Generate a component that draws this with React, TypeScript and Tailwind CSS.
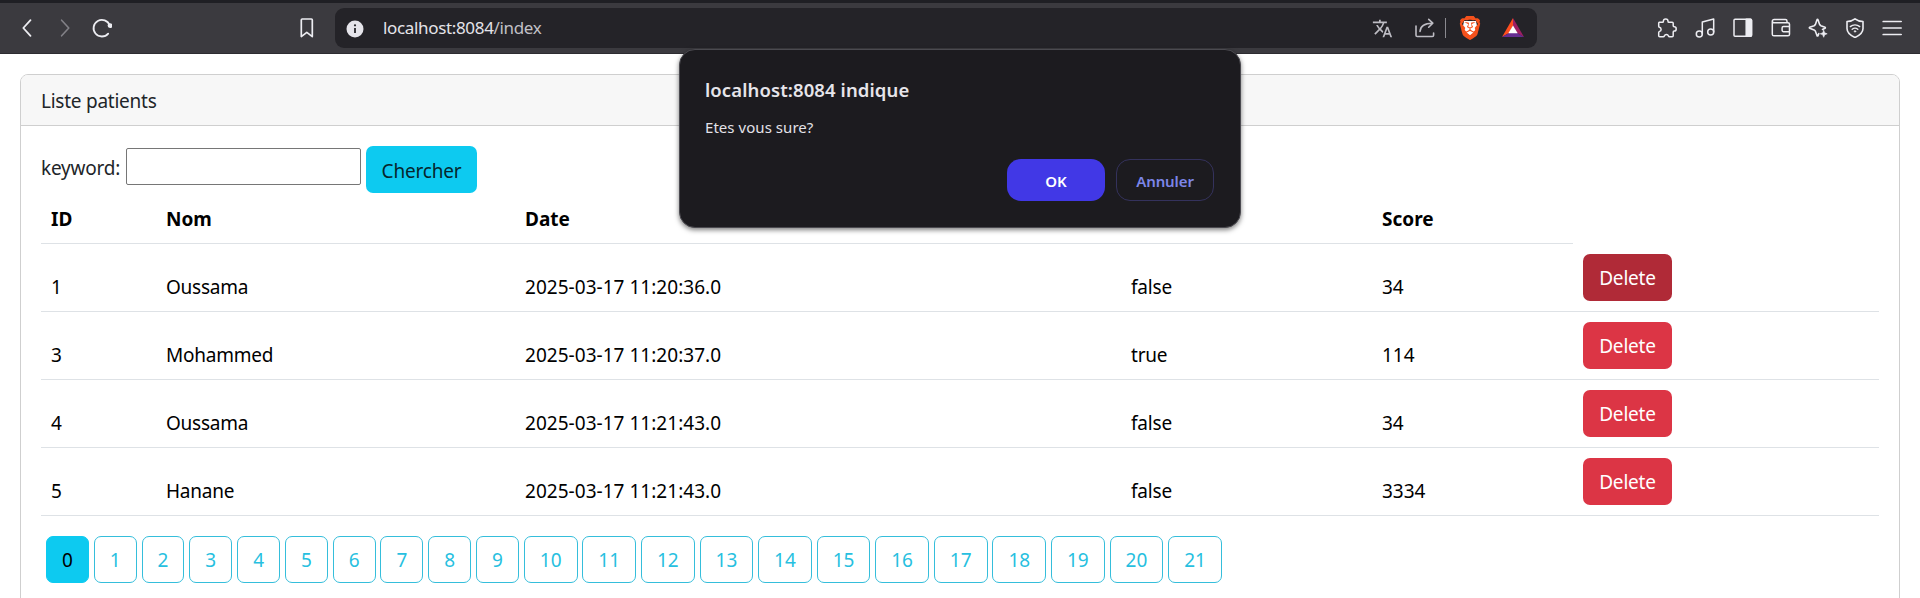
import type { ReactNode } from "react";
import { MdTranslate } from "react-icons/md";
import { SiBrave } from "react-icons/si";

function Icon({ children, className, width = 1.5 }: { children: ReactNode; className: string; width?: number }) {
  return (
    <svg
      viewBox="0 0 20 20"
      fill="none"
      stroke="currentColor"
      strokeWidth={width}
      strokeLinecap="round"
      strokeLinejoin="round"
      className={`size-5 shrink-0 ${className}`}
    >
      {children}
    </svg>
  );
}

function Toolbar() {
  return (
    <header className="flex h-[54px] items-center border-t-[3px] border-b border-t-[#1f1f24] border-b-[#2d2c31] bg-[#3b3a3f] pl-[17px] text-[#ededf2]">
      <Icon className="" width={1.8}><path d="M13.5 2.2 6.3 10l7.2 7.8" /></Icon>
      <Icon className="ml-[18px] text-[#828187]" width={1.6}><path d="M6.6 2.2 13.8 10l-7.2 7.8" /></Icon>
      <Icon className="ml-[17px]" width={1.8}>
        <path d="M17.700 7.400A8.300 8.300 0 1 0 16.200 15.600" />
        <circle cx="18" cy="7.600" r="1.500" fill="currentColor" />
      </Icon>
      <Icon className="ml-[186px]" width={1.7}><path d="M4.2 1h9.2a.9.9 0 0 1 .9.9v16.7l-5.500-4.200-5.500 4.200V1.900a.9.9 0 0 1 .9-.9Z" /></Icon>
      <div className="ml-[17px] flex h-10 w-[1202px] items-center rounded-[9px] bg-[#242328] pl-[11px] text-[#e5e4ea]">
        <svg viewBox="0 0 18 18" className="mt-0.5 size-[18px] shrink-0">
          <circle cx="9" cy="9" r="8.5" fill="#e5e4ea" />
          <path d="M9 8v5" stroke="#242328" strokeWidth="1.8" />
          <circle cx="9" cy="5.3" r="1.1" fill="#242328" />
        </svg>
        <span className="ml-[19px] w-[170px] whitespace-nowrap text-[17px] leading-10 tracking-[-0.34px]">
          localhost:8084<span className="text-[#c1c0c6]">/index</span>
        </span>
        <MdTranslate className="ml-[819px] size-[21px] text-[#bdbcc3]" />
        <Icon className="ml-[22px] text-[#bdbcc3]" width={1.6}>
          <path d="M1 8v9.2A1.3 1.3 0 0 0 2.300 18.500h15A1.300 1.300 0 0 0 18.600 17.200V15" />
          <path d="M5 13.500c.3-5 3.500-8.300 12.500-8.300M13.700 1.300l4.100 3.900-4.100 4" />
        </Icon>
        <span className="ml-[10px] h-5 w-px bg-[#8b8a90]" />
        <span className="relative ml-3 block size-[24px]">
          <svg viewBox="0 0 24 24" className="absolute inset-0 size-6"><path d="M6 5h12l1 5-2 7-5 3.500L7 17 5 10Z" fill="#fff" /></svg>
          <SiBrave className="absolute inset-0 size-6 text-[#f4511c]" />
        </span>
        <svg viewBox="0 0 24 22" className="ml-[19px] h-[22px] w-6">
          <path d="M12 1 1 20l7-4 4-7Z" fill="#ff4e1f" />
          <path d="M12 1v8l4 7 7 4Z" fill="#9e1f63" />
          <path d="M1 20h22l-7-4H8Z" fill="#662d91" />
          <path d="m12 8.500-4.700 7.800h9.400Z" fill="#fff" />
        </svg>
      </div>
      <Icon className="ml-[120px]">
        <path d="M2.200 4.300h3.300c.7 0 .9-.5.9-1.100C6.400 1.900 7.400 1 8.700 1S11 1.900 11 3.200c0 .6.2 1.100.9 1.100h3.300c.7 0 1 .4 1 1v2.500c0 .7.400 1 1 1 1.200 0 2 1 2 2.100 0 1.200-.8 2.200-2 2.200-.6 0-1 .3-1 1v3.700c0 .7-.4 1-1 1h-2.700c-.7 0-.9-.4-1.100-.9-.3-1-1-1.500-2-1.500s-1.700.5-2 1.500c-.2.5-.4.900-1.100.9H2.700c-.6 0-1-.4-1-1V14.500c0-.7.4-.9.9-1.100 1-.3 1.500-1 1.500-2s-.6-1.800-1.600-2.100c-.5-.1-.8-.4-.8-1V5.300c0-.6.300-1 .5-1Z" />
      </Icon>
      <Icon className="ml-[18px]">
        <circle cx="4.300" cy="16" r="3" />
        <circle cx="15.700" cy="14" r="3" />
        <path d="M7.300 16V4l11.400-3v13" />
      </Icon>
      <Icon className="ml-[18px]">
        <rect x="1" y="1.300" width="17.500" height="17" rx="1" />
        <path d="M13.200 1.300h4.300a1 1 0 0 1 1 1v15a1 1 0 0 1-1 1h-4.300Z" fill="currentColor" />
      </Icon>
      <Icon className="ml-[18px]">
        <path d="M1.300 3.500v12.700c0 1 .7 1.600 1.600 1.600h14c.9 0 1.600-.6 1.600-1.600V6.300c0-1-.7-1.600-1.600-1.600H3.200c-1 0-1.900-.3-1.900-1.500 0-1 .8-1.600 1.800-1.600h11.300c1 0 1.600.6 1.600 1.600v1.400M18.500 8.600h-6a1.400 1.400 0 0 0-1.400 1.400v2.300a1.400 1.400 0 0 0 1.400 1.400h6Z" />
      </Icon>
      <Icon className="ml-[17px]" width={1.6}>
        <path d="M14.500 11.500 17 10.200c.5-.3.5-.7 0-.9l-4.100-1.600c-.6-.3-1-.7-1.300-1.300L10 1.700c-.2-.5-.8-.5-1 0L7.400 6.400c-.3.600-.7 1-1.300 1.300L1.700 9.300c-.5.2-.5.700 0 .9l4.400 1.700c.6.3 1 .7 1.300 1.300L9 17.600c.2.5.8.5 1 0l.8-2" />
        <path d="m15.700 12.300 1 2.500 2.500 1-2.500 1-1 2.500-1-2.500-2.500-1 2.500-1Z" fill="currentColor" strokeWidth=".6" />
      </Icon>
      <Icon className="ml-[17px]" width={1.6}>
        <path d="M10 .8C12 2.400 14.500 3.400 18 3.500v7c0 4-3.700 7-8 9-4.300-2-8-5-8-9v-7C5.500 3.400 8 2.400 10 .8Z" />
        <path d="M5.300 8.600c2.700-2.300 6.700-2.300 9.400 0M7.200 11.200c1.700-1.300 3.900-1.300 5.600 0" strokeWidth="1.400" />
        <circle cx="10" cy="13.400" r=".8" fill="currentColor" strokeWidth=".6" />
      </Icon>
      <Icon className="ml-[17px]" width={1.7}><path d="M1.200 3.500h18M1.200 10h18M1.200 16.500h18" /></Icon>
    </header>
  );
}

const patients = [
  { id: 1, nom: "Oussama", date: "2025-03-17 11:20:36.0", malade: "false", score: 34 },
  { id: 3, nom: "Mohammed", date: "2025-03-17 11:20:37.0", malade: "true", score: 114 },
  { id: 4, nom: "Oussama", date: "2025-03-17 11:21:43.0", malade: "false", score: 34 },
  { id: 5, nom: "Hanane", date: "2025-03-17 11:21:43.0", malade: "false", score: 3334 },
];

const pages = Array.from({ length: 22 }, (_, i) => i);

function PatientTable() {
  return (
    <table className="w-[1838px] table-fixed border-separate border-spacing-0 text-left text-black">
      <colgroup>
        <col className="w-[115px]" />
        <col className="w-[359px]" />
        <col className="w-[606px]" />
        <col className="w-[251px]" />
        <col className="w-[201px]" />
        <col />
      </colgroup>
      <thead>
        <tr className="h-[51px] [&>th]:border-b [&>th]:border-[#dee2e6] [&>th]:px-2.5 [&>th]:pt-px [&>th]:font-bold">
          <th>ID</th>
          <th>Nom</th>
          <th>Date</th>
          <th>Malade</th>
          <th>Score</th>
        </tr>
      </thead>
      <tbody>
        {patients.map((p, i) => (
          <tr key={p.id} className="h-[68px] [&>td]:border-b [&>td]:border-[#dee2e6] [&>td]:px-2.5 [&>td]:pt-[19px]">
            <td>{p.id}</td>
            <td className="tracking-[-0.25px]">{p.nom}</td>
            <td className="tracking-[0.03px]">{p.date}</td>
            <td className="tracking-[-0.2px]">{p.malade}</td>
            <td>{p.score}</td>
            <td className="pt-0!">
              <button className={`block h-[47px] w-[89px] rounded-[7px] pt-px tracking-[-0.2px] text-white ${i === 0 ? "bg-[#b02a37]" : "bg-[#dc3545]"}`}>
                Delete
              </button>
            </td>
          </tr>
        ))}
      </tbody>
    </table>
  );
}

function ConfirmDialog() {
  return (
    <div className="absolute top-[49px] left-[679px] flex h-[179px] w-[562px] flex-col rounded-2xl border border-[#4b4a50] bg-[#1c1b1f] pr-[26px] pl-[25px] shadow-[0_2px_5px_rgba(0,0,0,0.5)]">
      <h1 className="mt-[26px] text-[18.500px] leading-7 font-semibold tracking-[0.1px] text-[#e6e5ea]">localhost:8084 indique</h1>
      <p className="mt-[13px] text-[15px] leading-5 tracking-[0.05px] text-[#e3e2e8]">Etes vous sure?</p>
      <div className="mt-[22px] flex justify-end gap-[11px] text-[15px] font-semibold">
        <button className="h-[42px] w-[98px] rounded-[14px] bg-[#4138e6] pt-0.5 text-white">OK</button>
        <button className="h-[42px] w-[98px] rounded-[14px] border border-[#34325c] pt-0.5 tracking-[-0.1px] text-[#7c86e8]">Annuler</button>
      </div>
    </div>
  );
}

export default function App() {
  return (
    <div className="relative h-[598px] w-[1920px] overflow-hidden bg-white font-['Noto_Sans','Open_Sans',sans-serif] text-[19px] leading-[30px] text-[#212529]">
      <Toolbar />
      <main className="mx-5 mt-5 h-[600px] rounded-t-[8px] border border-[#cfcfcf]">
        <h2 className="h-[51px] rounded-t-[7px] border-b border-[#cfcfcf] bg-[#f7f7f7] px-5 pt-[11px] tracking-[-0.25px]">Liste patients</h2>
        <section className="px-5 pt-5">
          <form className="flex h-[47px] items-start" onSubmit={(e) => e.preventDefault()}>
            <label htmlFor="keyword" className="mt-[7px] w-[85px] tracking-[-0.2px]">keyword:</label>
            <input id="keyword" className="mt-0.5 h-[37px] w-[235px] rounded-[2px] border border-[#767676] px-1 outline-none" />
            <button className="ml-[5px] h-[47px] w-[111px] rounded-[7px] bg-[#0dcaf0] pt-0.5 tracking-[-0.2px] text-[#06262d]">Chercher</button>
          </form>
          <PatientTable />
          <nav className="mt-5 ml-[5px] flex gap-[4.900px]">
            {pages.map((n) => (
              <button
                key={n}
                className={`h-[47px] shrink-0 rounded-[7px] border pt-px ${n < 10 ? "w-[42.900px]" : "w-[53.700px]"} ${
                  n === 0 ? "border-[#0dcaf0] bg-[#0dcaf0] text-black" : "border-[#35bedb] text-[#27bfe0]"
                }`}
              >
                {n}
              </button>
            ))}
          </nav>
        </section>
      </main>
      <ConfirmDialog />
    </div>
  );
}
